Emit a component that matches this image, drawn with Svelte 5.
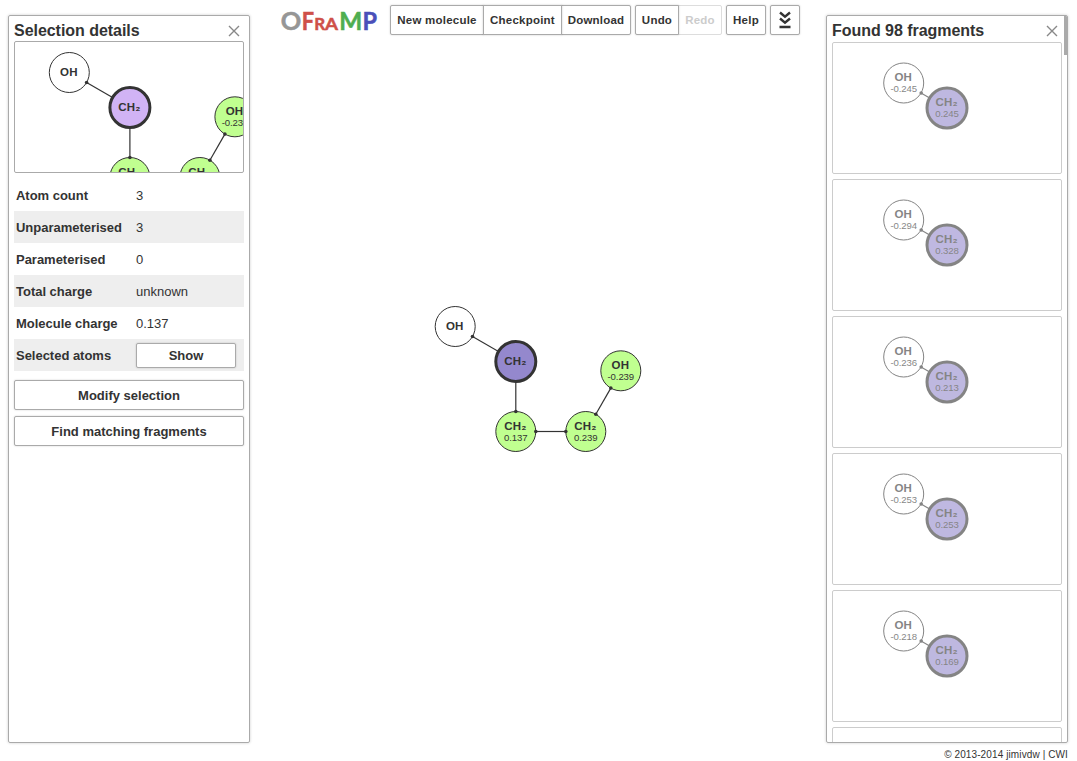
<script>
  const details = [
    ['Atom count', '3'],
    ['Unparameterised', '3'],
    ['Parameterised', '0'],
    ['Total charge', 'unknown'],
    ['Molecule charge', '0.137']
  ];
  const groups = [
    [{ label: 'New molecule', w: 94 }, { label: 'Checkpoint', w: 79 }, { label: 'Download', w: 70 }],
    [{ label: 'Undo', w: 44 }, { label: 'Redo', w: 44, disabled: true }],
    [{ label: 'Help', w: 40 }]
  ];
  const atoms = [
    { x: 205.2, y: 326.5, label: 'OH' },
    { x: 265.8, y: 361.5, label: 'CH₂', selected: true },
    { x: 265.8, y: 431.5, label: 'CH₂', charge: '0.137' },
    { x: 335.8, y: 431.5, label: 'CH₂', charge: '0.239' },
    { x: 370.8, y: 370.8, label: 'OH', charge: '-0.239' }
  ];
  const bonds = [
    [222.5, 336.5, 265.8, 361.5, 1],
    [265.8, 361.5, 265.8, 411.5, 2],
    [285.8, 431.5, 315.8, 431.5, 3],
    [345.8, 414.2, 360.8, 388.1, 3]
  ];
  const fragments = [
    ['-0.245', '0.245'],
    ['-0.294', '0.328'],
    ['-0.236', '0.213'],
    ['-0.253', '0.253'],
    ['-0.218', '0.169'],
    ['', '']
  ];
</script>

{#snippet atom(a, fill)}
  <circle cx={a.x} cy={a.y} r="20" class:selected={a.selected} fill={a.selected ? fill : a.charge && !a.plain ? '#c0ff90' : '#fff'} />
  <text class="element" x={a.x - 0.4} y={a.charge ? a.y - 2 : a.y + 3.4}>{a.label}</text>
  {#if a.charge}<text class="charge" x={a.x} y={a.y + 9.2}>{a.charge}</text>{/if}
{/snippet}

{#snippet molecule(fill)}
  {#each bonds as [x1, y1, x2, y2]}
    <line {x1} {y1} {x2} {y2} />
  {/each}
  {#each atoms as a}{@render atom(a, fill)}{/each}
  {#each bonds as [x1, y1, x2, y2, kind]}
    {#if kind & 1}<circle class="joint" cx={x1} cy={y1} r="1.8" />{/if}
    {#if kind & 2}<circle class="joint" cx={x2} cy={y2} r="1.8" />{/if}
  {/each}
{/snippet}

{#snippet cross()}
  <svg class="cross" width="12" height="12" viewBox="0 0 12 12"><path d="M1 1 11 11M11 1 1 11" /></svg>
{/snippet}

<div class="page">
  <aside class="panel">
    <header><h2>Selection details</h2>{@render cross()}</header>
    <svg class="preview" width="228" height="130" viewBox="150.9 296 228 130">{@render molecule('#d1b3f5')}</svg>
    <dl>
      {#each details as [name, value]}
        <div><dt>{name}</dt><dd>{value}</dd></div>
      {/each}
      <div><dt>Selected atoms</dt><dd><button class="show">Show</button></dd></div>
    </dl>
    <button class="action">Modify selection</button>
    <button class="action">Find matching fragments</button>
  </aside>

  <main>
    <nav>
      <svg class="logo" width="98" height="30" viewBox="0 0 98 30">
        <text x="-.3" y="24.6" font-size="24.5" textLength="20.5" lengthAdjust="spacingAndGlyphs" fill="#969696" stroke="#969696">O</text>
        <text x="20.8" y="24.6" font-size="24.5" textLength="12.3" lengthAdjust="spacingAndGlyphs" fill="#cf5049" stroke="#cf5049">F</text>
        <text x="33.3" y="24.6" font-size="17.5" textLength="11" lengthAdjust="spacingAndGlyphs" fill="#cf5049" stroke="#cf5049">R</text>
        <text x="44" y="24.6" font-size="17.5" textLength="13" lengthAdjust="spacingAndGlyphs" fill="#cf5049" stroke="#cf5049">A</text>
        <text x="58.2" y="24.6" font-size="24.5" textLength="23" lengthAdjust="spacingAndGlyphs" fill="#4fae50" stroke="#4fae50">M</text>
        <text x="81.5" y="24.6" font-size="24.5" textLength="14.5" lengthAdjust="spacingAndGlyphs" fill="#4a4fb9" stroke="#4a4fb9">P</text>
      </svg>
      {#each groups as group}
        <div class="group">
          {#each group as item}
            <button disabled={item.disabled} style:width="{item.w}px">{item.label}</button>
          {/each}
        </div>
      {/each}
      <div class="group">
        <button class="more" aria-label="More">
          <svg width="14" height="18" viewBox="0 0 14 18"><path d="M2 1.5 7 5.7 12 1.5M2 7.5 7 11.7 12 7.5M1.5 16H12.5" /></svg>
        </button>
      </div>
    </nav>
    <svg class="canvas" width="576" height="708" viewBox="0 35 576 708">{@render molecule('#9488cd')}</svg>
  </main>

  <aside class="panel found">
    <header><h2>Found 98 fragments</h2>{@render cross()}</header>
    <div class="list">
      {#each fragments as [oh, ch]}
        <svg class="fragment" width="228" height="130" viewBox="0 0 228 130">
          {#if oh}
            <g>
              <line x1="88" y1="50" x2="114" y2="65" />
              {@render atom({ x: 70.7, y: 40, label: 'OH', charge: oh, plain: true })}
              {@render atom({ x: 114, y: 65, label: 'CH₂', charge: ch, selected: true }, '#9489cd')}
              <circle class="joint" cx="88.2" cy="50" r="1.8" />
            </g>
          {/if}
        </svg>
      {/each}
    </div>
    <span class="thumb"></span>
  </aside>

  <footer>© 2013-2014 jimivdw | CWI</footer>
</div>

<style>
  :global(body) { margin: 0; background: #fff; }
  .page {
    box-sizing: border-box;
    width: 1077px;
    height: 761px;
    padding: 0 9px 0 8px;
    display: grid;
    grid-template: 743px 18px / 242px 576px 242px;
    overflow: hidden;
    color: #333;
    font: 13px "Liberation Sans", Arial, sans-serif;
  }
  .panel {
    box-sizing: border-box;
    position: relative;
    margin-top: 15px;
    padding: 0 5px;
    border: 1px solid #aaa;
    border-radius: 2px;
    box-shadow: 0 0 3px rgba(0, 0, 0, .2);
    overflow: hidden;
  }
  header { height: 25px; display: flex; justify-content: space-between; padding: 0 4px 0 0; }
  h2 { margin: 0; padding-top: 5px; font-size: 16px; line-height: 19px; letter-spacing: -.04px; }
  .cross { margin-top: 9px; }
  .cross path { stroke: #888; stroke-width: 1.4; fill: none; }
  .preview, .fragment { display: block; border: 1px solid #aaa; border-radius: 2px; overflow: hidden; }
  dl { margin: 6px 0 9px; }
  dl div { height: 32px; display: flex; align-items: center; padding-left: 2px; }
  dl div:nth-child(even) { background: #eee; }
  dt { width: 120px; font-weight: bold; letter-spacing: -.02px; }
  dd { margin: 0; }
  button {
    box-sizing: border-box;
    display: block;
    padding: 0;
    background: #fff;
    border: 1px solid #aaa;
    border-radius: 2px;
    box-shadow: 0 0 2px rgba(0, 0, 0, .2);
    color: #333;
    font: bold 13px "Liberation Sans", Arial, sans-serif;
  }
  .show { width: 100px; height: 25px; }
  .action { width: 230px; height: 30px; margin-bottom: 6px; }
  nav { height: 30px; padding: 5px 0 0 31px; display: flex; gap: 4px; }
  .logo { margin-right: 7px; font-family: Lato, sans-serif; font-weight: bold; stroke-width: .5; }
  .group { display: flex; }
  .group button { height: 30px; font-size: 11.5px; letter-spacing: .22px; white-space: nowrap; }
  .group button + button { margin-left: -1px; border-top-left-radius: 0; border-bottom-left-radius: 0; }
  .group button:not(:last-child) { border-top-right-radius: 0; border-bottom-right-radius: 0; position: relative; }
  .group button:disabled { color: #ccc; border-color: #ddd; box-shadow: none; }
  .group .more { width: 30px; display: grid; place-items: center; }
  .more path { fill: none; stroke: #333; stroke-width: 2.4; }
  .canvas { display: block; }
  line { stroke: #333; stroke-width: 1.2; }
  circle { stroke: #333; stroke-width: 1; }
  circle.selected { stroke-width: 3; }
  circle.joint { fill: #333; stroke: none; }
  .element, .charge { text-anchor: middle; fill: #333; }
  .element { font-size: 11.5px; font-weight: bold; letter-spacing: .2px; }
  .charge { font-size: 9.6px; letter-spacing: -.12px; }
  .list { display: grid; gap: 5px; margin-top: 1px; }
  .fragment { border-color: #ccc; }
  .fragment g { opacity: .6; }
  .thumb { position: absolute; top: 0; right: 0; width: 3px; height: 39px; background: #aaa; }
  footer { grid-column: 1 / -1; padding-top: 6px; text-align: right; font-size: 10px; line-height: 12px; letter-spacing: .11px; }
</style>
